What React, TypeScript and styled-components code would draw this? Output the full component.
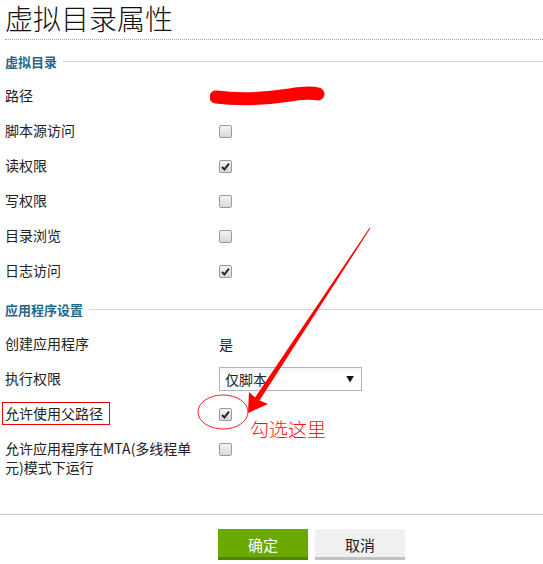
import React from "react";
import styled, { createGlobalStyle } from "styled-components";

const GlobalStyle = createGlobalStyle`
  html, body {
    margin: 0;
    padding: 0;
    background: #fff;
  }
  body {
    font-family: "Liberation Sans", "Noto Sans CJK SC", sans-serif;
    color: #222;
  }
`;

type Row = {
  label: string;
  kind: "text" | "check" | "select" | "scribble";
  value?: string;
  checked?: boolean;
  boxed?: boolean;
  tall?: boolean;
};

const dirRows: Row[] = [
  { label: "路径", kind: "scribble" },
  { label: "脚本源访问", kind: "check", checked: false },
  { label: "读权限", kind: "check", checked: true },
  { label: "写权限", kind: "check", checked: false },
  { label: "目录浏览", kind: "check", checked: false },
  { label: "日志访问", kind: "check", checked: true },
];

const appRows: Row[] = [
  { label: "创建应用程序", kind: "text", value: "是" },
  { label: "执行权限", kind: "select", value: "仅脚本" },
  { label: "允许使用父路径", kind: "check", checked: true, boxed: true },
  { label: "允许应用程序在MTA(多线程单元)模式下运行", kind: "check", checked: false, tall: true },
];

const Checkbox: React.FC<{ checked?: boolean }> = ({ checked }) => (
  <StyledCheckbox>
    {checked && (
      <svg width="9" height="9" viewBox="0 0 9 9">
        <path d="M1 5 L3.4 7.4 L8 1.6" fill="none" stroke="#2a2a2a" strokeWidth="2" />
      </svg>
    )}
  </StyledCheckbox>
);

const FieldValue: React.FC<{ row: Row }> = ({ row }) => {
  switch (row.kind) {
    case "check":
      return <Checkbox checked={row.checked} />;
    case "select":
      return (
        <Select>
          <span>{row.value}</span>
          <span className="caret">▼</span>
        </Select>
      );
    case "scribble":
      // the path value is blacked out with a red brush stroke in the picture
      return (
        <Scribble width="116" height="22" viewBox="0 0 116 22">
          <path
            d="M6 12 C 30 15, 60 13, 80 10 C 92 8, 104 8, 108 9"
            fill="none"
            stroke="#ff0000"
            strokeWidth="13"
            strokeLinecap="round"
          />
        </Scribble>
      );
    default:
      return <PlainValue>{row.value}</PlainValue>;
  }
};

const Section: React.FC<{ title: string; rows: Row[] }> = ({ title, rows }) => (
  <>
    <SectionHeading>
      <span>{title}</span>
    </SectionHeading>
    {rows.map(row => (
      <FieldRow key={row.label} $tall={row.tall}>
        <Label>{row.boxed ? <Boxed>{row.label}</Boxed> : row.label}</Label>
        <Value>
          <FieldValue row={row} />
        </Value>
      </FieldRow>
    ))}
  </>
);

export default function App() {
  return (
    <Page>
      <GlobalStyle />
      <Title>虚拟目录属性</Title>
      <Section title="虚拟目录" rows={dirRows} />
      <Section title="应用程序设置" rows={appRows} />
      <Footer>
        <Button $primary>确定</Button>
        <Button>取消</Button>
      </Footer>

      <Annotation width="543" height="564" viewBox="0 0 543 564">
        <ellipse cx="223" cy="412" rx="25" ry="17" fill="none" stroke="#ff2020" strokeWidth="1" />
        <polygon
          points="248,413 249,392 255,397.6 369.6,227.7 370.4,228.3 259.5,400.6 268,404"
          fill="#ff0000"
        />
      </Annotation>
      <Note>勾选这里</Note>
    </Page>
  );
}

const Page = styled.div`
  position: relative;
  width: 543px;
  height: 564px;
  overflow: hidden;
`;

const Title = styled.h1`
  margin: 0 0 0 5px;
  padding: 0;
  height: 40px;
  box-sizing: border-box;
  font-family: "Noto Sans CJK SC", sans-serif;
  font-weight: 300;
  font-size: 28px;
  line-height: 36px;
  color: #111;
  border-bottom: 1px dotted #aaa;
`;

const SectionHeading = styled.div`
  display: flex;
  align-items: center;
  gap: 6px;
  height: 34px;
  padding: 0 0 0 5px;
  margin-top: 4px;
  font-family: "Noto Sans CJK SC", sans-serif;
  font-weight: 700;
  font-size: 13px;
  color: #1f6a8c;

  &::after {
    content: "";
    flex: 1;
    height: 1px;
    background: #d6d6d6;
  }
`;

const FieldRow = styled.div<{ $tall?: boolean }>`
  display: flex;
  align-items: ${p => (p.$tall ? "flex-start" : "center")};
  height: ${p => (p.$tall ? "60px" : "35px")};
  padding: ${p => (p.$tall ? "8px" : "0")} 0 0 5px;
  box-sizing: border-box;
`;

const Label = styled.div`
  flex: 0 0 194px;
  padding-right: 20px;
  font-family: "Noto Sans CJK SC", sans-serif;
  font-size: 14px;
  line-height: 19px;
  color: #222;
`;

const Boxed = styled.span`
  display: inline-block;
  margin-left: -3px;
  padding: 1px 6px 1px 2px;
  border: 1px solid #e00;
`;

const Value = styled.div`
  display: flex;
  align-items: center;
  min-height: 19px;
`;

const Scribble = styled.svg`
  margin-left: -9px;
`;

const PlainValue = styled.span`
  font-family: "Noto Sans CJK SC", sans-serif;
  font-size: 14px;
  color: #222;
`;

const StyledCheckbox = styled.span`
  display: inline-flex;
  align-items: center;
  justify-content: center;
  width: 11px;
  height: 11px;
  border: 1px solid #9a9a9a;
  border-radius: 2px;
  background: linear-gradient(#f4f4f4, #d8d8d8);
  margin-top: 1px;
`;

const Select = styled.div`
  display: flex;
  align-items: center;
  justify-content: space-between;
  width: 143px;
  height: 24px;
  box-sizing: border-box;
  border: 1px solid #b4b4b4;
  padding: 0 7px 0 5px;
  font-family: "Noto Sans CJK SC", sans-serif;
  font-size: 14px;
  color: #222;
  background: linear-gradient(#f6f6f6, #fff 40%);

  .caret {
    font-size: 8px;
    color: #111;
  }
`;

const Footer = styled.div`
  display: flex;
  gap: 7px;
  margin-top: 23px;
  padding: 14px 0 0 218px;
  border-top: 1px solid #c6c6c6;
`;

const Button = styled.button<{ $primary?: boolean }>`
  width: 90px;
  height: 31px;
  border: none;
  border-bottom: 3px solid ${p => (p.$primary ? "#4e8600" : "#c2c2c2")};
  background: ${p => (p.$primary ? "#6aa900" : "#f0f0f0")};
  color: ${p => (p.$primary ? "#fff" : "#222")};
  font-family: "Noto Sans CJK SC", sans-serif;
  font-size: 15px;
  padding: 2px 0 0;
  cursor: pointer;
`;

const Annotation = styled.svg`
  position: absolute;
  left: 0;
  top: 0;
  pointer-events: none;
`;

const Note = styled.span`
  position: absolute;
  left: 250px;
  top: 415px;
  font-family: "Noto Sans CJK SC", sans-serif;
  font-weight: 300;
  font-size: 19px;
  color: #ff1010;
`;
